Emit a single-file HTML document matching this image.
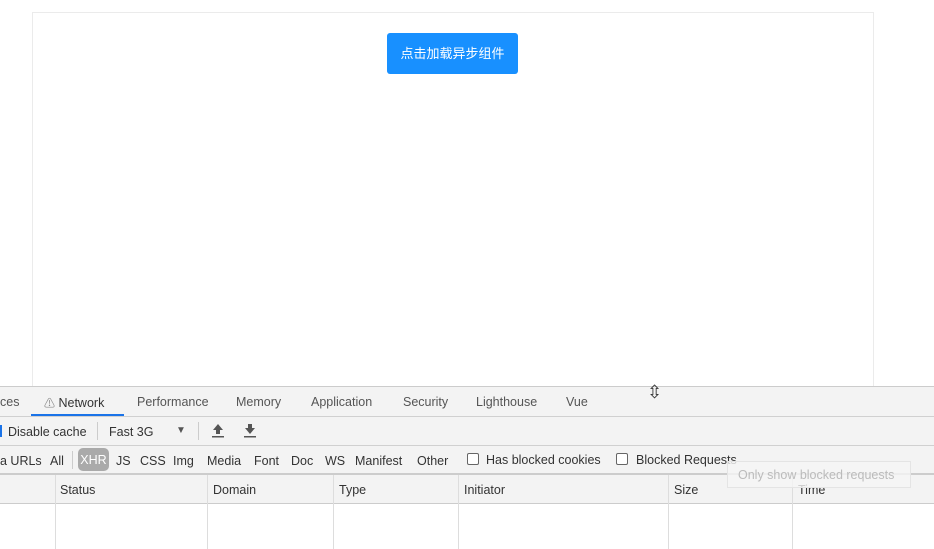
<!DOCTYPE html>
<html><head><meta charset="utf-8"><style>
*{margin:0;padding:0;box-sizing:border-box}
body{width:934px;height:549px;overflow:hidden;background:#fff;position:relative;font-family:"Liberation Sans","Noto Sans CJK SC",sans-serif;font-size:12.5px;color:#333}
.a{position:absolute;white-space:nowrap}
.page{left:32px;top:12px;width:842px;height:380px;border:1px solid #ebebeb}
.btn{left:387px;top:33px;width:131px;height:41px;background:#1890ff;border-radius:3px;color:#fff;font-size:13px;line-height:41px;text-align:center}
.bar{left:0;width:934px;background:#f3f3f3;border-bottom:1px solid #d0d0d0}
.t{top:395px;color:#555}
.cb{width:12px;height:12px;border:1px solid #666;border-radius:2px;background:#fff}
.vl{width:1px;background:#ddd}
</style></head><body>
<div class="a page"></div>
<div class="a btn">点击加载异步组件</div>

<div class="a bar" style="top:386px;height:31px;border-top:1px solid #ccc"></div>
<div class="a t" style="left:0">ces</div>
<div class="a t" style="left:44px;color:#333"><span style="color:#888;font-size:11px">⚠</span> Network</div>
<div class="a" style="left:31px;top:414px;width:93px;height:2px;background:#1a73e8"></div>
<div class="a t" style="left:137px">Performance</div>
<div class="a t" style="left:236px">Memory</div>
<div class="a t" style="left:311px">Application</div>
<div class="a t" style="left:403px">Security</div>
<div class="a t" style="left:476px">Lighthouse</div>
<div class="a t" style="left:566px">Vue</div>
<div class="a" style="left:647px;top:382px;font-size:18px;color:#333">⇳</div>

<div class="a bar" style="top:417px;height:29px"></div>
<div class="a" style="left:0;top:425px;width:2px;height:12px;background:#1a73e8"></div>
<div class="a" style="left:8px;top:425px">Disable cache</div>
<div class="a vl" style="left:97px;top:422px;height:18px;background:#ccc"></div>
<div class="a" style="left:109px;top:425px">Fast 3G</div>
<div class="a" style="left:176px;top:425px;font-size:10px;color:#555">▼</div>
<div class="a vl" style="left:198px;top:422px;height:18px;background:#ccc"></div>
<svg class="a" style="left:211px;top:423px" width="14" height="15" viewBox="0 0 14 15"><path d="M7 1 L12 7 H9 V11 H5 V7 H2 Z" fill="#555"/><rect x="1" y="13" width="12" height="1.5" fill="#555"/></svg>
<svg class="a" style="left:243px;top:423px" width="14" height="15" viewBox="0 0 14 15"><path d="M5 1 H9 V5 H12 L7 11 L2 5 H5 Z" fill="#555"/><rect x="1" y="13" width="12" height="1.5" fill="#555"/></svg>

<div class="a bar" style="top:446px;height:29px;border-bottom:2px solid #ccc"></div>
<div class="a" style="left:0;top:454px">a URLs</div>
<div class="a" style="left:50px;top:454px">All</div>
<div class="a vl" style="left:72px;top:451px;height:18px;background:#ccc"></div>
<div class="a" style="left:78px;top:448px;width:31px;height:23px;background:#aaa;border-radius:5px;color:#fff;text-align:center;line-height:25px">XHR</div>
<div class="a" style="left:116px;top:454px">JS</div>
<div class="a" style="left:140px;top:454px">CSS</div>
<div class="a" style="left:173px;top:454px">Img</div>
<div class="a" style="left:207px;top:454px">Media</div>
<div class="a" style="left:254px;top:454px">Font</div>
<div class="a" style="left:291px;top:454px">Doc</div>
<div class="a" style="left:325px;top:454px">WS</div>
<div class="a" style="left:355px;top:454px">Manifest</div>
<div class="a" style="left:417px;top:454px">Other</div>
<div class="a cb" style="left:467px;top:453px"></div>
<div class="a" style="left:486px;top:453px">Has blocked cookies</div>
<div class="a cb" style="left:616px;top:453px"></div>
<div class="a" style="left:636px;top:453px">Blocked Requests</div>

<div class="a bar" style="top:475px;height:29px;border-bottom:1px solid #ccc"></div>
<div class="a" style="left:60px;top:483px">Status</div>
<div class="a" style="left:213px;top:483px">Domain</div>
<div class="a" style="left:339px;top:483px">Type</div>
<div class="a" style="left:464px;top:483px">Initiator</div>
<div class="a" style="left:674px;top:483px">Size</div>
<div class="a" style="left:798px;top:483px">Time</div>
<div class="a vl" style="left:55px;top:475px;height:74px"></div>
<div class="a vl" style="left:207px;top:475px;height:74px"></div>
<div class="a vl" style="left:333px;top:475px;height:74px"></div>
<div class="a vl" style="left:458px;top:475px;height:74px"></div>
<div class="a vl" style="left:668px;top:475px;height:74px"></div>
<div class="a vl" style="left:792px;top:475px;height:74px"></div>
<div class="a" style="left:727px;top:461px;width:184px;height:27px;background:rgba(245,245,245,.8);border:1px solid #e4e4e4;color:#bbb;line-height:26px;padding-left:10px">Only show blocked requests</div>
</body></html>
